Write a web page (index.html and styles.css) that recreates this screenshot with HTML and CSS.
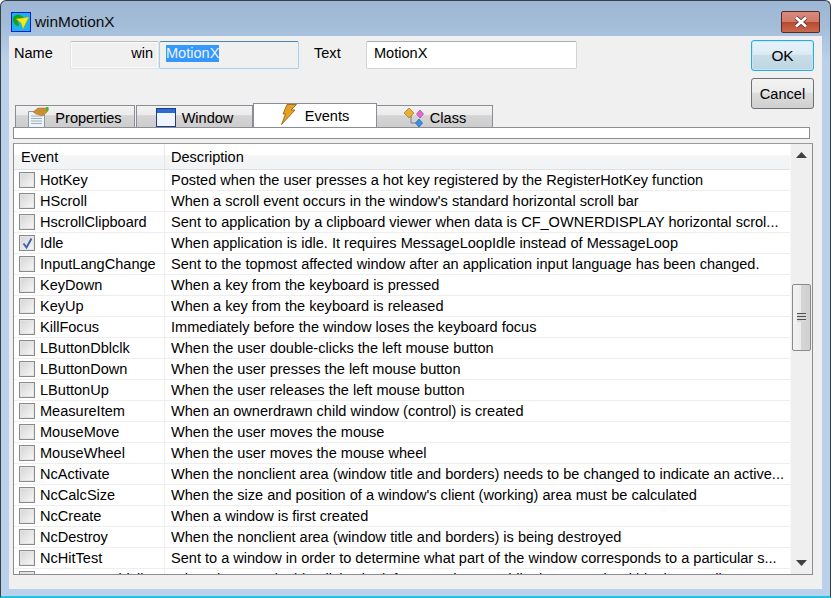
FILE: index.html
```html
<!DOCTYPE html>
<html lang="en">
<head>
<meta charset="utf-8">
<title>winMotionX</title>
<link rel="stylesheet" href="styles.css">
</head>
<body>
<div class="window">
  <div class="titlebar">
    <svg class="app-icon" width="20" height="20" viewBox="0 0 20 20">
      <rect x="0.5" y="0.5" width="19" height="19" fill="#19b5e8" stroke="#1414d8"/>
      <path d="M2 9 C1 4 5 2 9 3 L14 6 L7 9 L8 14 C5 14 3 12 2 9Z" fill="#18a018"/>
      <path d="M5 7 L18 5 L12 17 L10 11Z" fill="#f4e820" stroke="#b0a010" stroke-width=".5"/>
    </svg>
    <span class="title">winMotionX</span>
    <div class="close"><svg width="16" height="12" viewBox="0 0 16 12"><path d="M3 1.5 L13 10.5 M13 1.5 L3 10.5" stroke="#50302c" stroke-width="4.2"/><path d="M3 1.5 L13 10.5 M13 1.5 L3 10.5" stroke="#fff" stroke-width="2.8"/></svg></div>
  </div>
  <div class="client">
    <div class="top">
      <div class="top-left">
        <div class="form-row">
          <span class="label name-label">Name</span>
          <div class="field prefix">win</div>
          <div class="field focused"><span class="selected">MotionX</span></div>
          <span class="label text-label">Text</span>
          <div class="field plain">MotionX</div>
        </div>
        <div class="tabs">
          <div class="tab tab-props">
            <svg width="21" height="21" viewBox="0 0 21 21"><path d="M.5 4.5 H16.5 V20.5 H.5Z" fill="#eef3f6" stroke="#8a9aa6"/><path d="M3 9H14M3 11.5H14M3 14H14M3 16.5H14" stroke="#9ab0bc"/><path d="M5 5 L10 1 H20 V4 L15 9 L8 7Z" fill="#c89030" stroke="#a87420" stroke-width=".5"/><rect x="18" y="0" width="2.5" height="3.5" fill="#30c030"/></svg>
            <span>Properties</span>
          </div>
          <div class="tab tab-window">
            <svg width="20" height="19" viewBox="0 0 20 19"><rect x=".5" y=".5" width="19" height="18" fill="#f0f4fc" stroke="#1c3c8c"/><rect x="1" y="1" width="18" height="4" fill="#2c6cd0"/></svg>
            <span>Window</span>
          </div>
          <div class="tab tab-events active">
            <svg width="16" height="21" viewBox="0 0 16 21"><path d="M6 .5 H15.5 L10 6 H14 L.5 20.5 L4.5 10 H2Z" fill="#e8a020" stroke="#8a5a18" stroke-width=".8"/></svg>
            <span>Events</span>
          </div>
          <div class="tab tab-class">
            <svg width="21" height="19" viewBox="0 0 21 19"><path d="M8 7 V15 H14" fill="none" stroke="#6a8090"/><path d="M6 0 L11 5 L6 10 L1 5Z" fill="#e8b030" stroke="#a07818" stroke-width=".7"/><path d="M17 2 L20.5 6 L17 10 L13.5 6Z" fill="#e868d0" stroke="#a040a0" stroke-width=".7"/><path d="M16 11 L19.5 15 L16 19 L12.5 15Z" fill="#3c90e0" stroke="#2060a0" stroke-width=".7"/></svg>
            <span>Class</span>
          </div>
        </div>
      </div>
      <div class="buttons">
        <div class="btn default">OK</div>
        <div class="btn">Cancel</div>
      </div>
    </div>
    <div class="strip"></div>
    <div class="list">
      <div class="table">
        <div class="head">
          <div class="h-event">Event</div>
          <div class="h-desc">Description</div>
        </div>
        <div class="rows">
          <div class="row"><span class="check"></span><span class="ev">HotKey</span><span class="desc">Posted when the user presses a hot key registered by the RegisterHotKey function</span></div>
          <div class="row"><span class="check"></span><span class="ev">HScroll</span><span class="desc">When a scroll event occurs in the window's standard horizontal scroll bar</span></div>
          <div class="row"><span class="check"></span><span class="ev">HscrollClipboard</span><span class="desc">Sent to application by a clipboard viewer when data is CF_OWNERDISPLAY horizontal scrol...</span></div>
          <div class="row"><span class="check checked"><svg width="13" height="13" viewBox="0 0 13 13"><path d="M2.5 6.5 L5.5 10.5 L10.5 1.5" fill="none" stroke="#4060b0" stroke-width="2"/></svg></span><span class="ev">Idle</span><span class="desc">When application is idle. It requires MessageLoopIdle instead of MessageLoop</span></div>
          <div class="row"><span class="check"></span><span class="ev">InputLangChange</span><span class="desc">Sent to the topmost affected window after an application input language has been changed.</span></div>
          <div class="row"><span class="check"></span><span class="ev">KeyDown</span><span class="desc">When a key from the keyboard is pressed</span></div>
          <div class="row"><span class="check"></span><span class="ev">KeyUp</span><span class="desc">When a key from the keyboard is released</span></div>
          <div class="row"><span class="check"></span><span class="ev">KillFocus</span><span class="desc">Immediately before the window loses the keyboard focus</span></div>
          <div class="row"><span class="check"></span><span class="ev">LButtonDblclk</span><span class="desc">When the user double-clicks the left mouse button</span></div>
          <div class="row"><span class="check"></span><span class="ev">LButtonDown</span><span class="desc">When the user presses the left mouse button</span></div>
          <div class="row"><span class="check"></span><span class="ev">LButtonUp</span><span class="desc">When the user releases the left mouse button</span></div>
          <div class="row"><span class="check"></span><span class="ev">MeasureItem</span><span class="desc">When an ownerdrawn child window (control) is created</span></div>
          <div class="row"><span class="check"></span><span class="ev">MouseMove</span><span class="desc">When the user moves the mouse</span></div>
          <div class="row"><span class="check"></span><span class="ev">MouseWheel</span><span class="desc">When the user moves the mouse wheel</span></div>
          <div class="row"><span class="check"></span><span class="ev">NcActivate</span><span class="desc">When the nonclient area (window title and borders) needs to be changed to indicate an active...</span></div>
          <div class="row"><span class="check"></span><span class="ev">NcCalcSize</span><span class="desc">When the size and position of a window's client (working) area must be calculated</span></div>
          <div class="row"><span class="check"></span><span class="ev">NcCreate</span><span class="desc">When a window is first created</span></div>
          <div class="row"><span class="check"></span><span class="ev">NcDestroy</span><span class="desc">When the nonclient area (window title and borders) is being destroyed</span></div>
          <div class="row"><span class="check"></span><span class="ev">NcHitTest</span><span class="desc">Sent to a window in order to determine what part of the window corresponds to a particular s...</span></div>
          <div class="row"><span class="check"></span><span class="ev">NcLButtonDblclk</span><span class="desc">When the user double-clicks the left mouse button while the cursor is within the nonclient</span></div>
        </div>
      </div>
      <div class="scrollbar">
        <svg class="arrow" width="11" height="6" viewBox="0 0 11 6"><path d="M5.5 0 L11 6 H0Z" fill="#404040"/></svg>
        <div class="track"><div class="thumb"><span class="grip"></span></div></div>
        <svg class="arrow" width="11" height="6" viewBox="0 0 11 6"><path d="M5.5 6 L11 0 H0Z" fill="#404040"/></svg>
      </div>
    </div>
  </div>
</div>
</body>
</html>
```
FILE: styles.css
```css
* { box-sizing: border-box; }
html, body { margin: 0; padding: 0; }
body { width: 831px; height: 598px; overflow: hidden; font-family: "Liberation Sans", Arial, sans-serif; font-size: 14.55px; color: #000; background: #fff; }
.window { width: 831px; height: 598px; display: flex; flex-direction: column; border: 1px solid #3a4048; border-bottom: 2px solid #20c4e0; border-radius: 6px 6px 0 0; background: linear-gradient(#9db7d4 0, #a3bcd8 24px, #b9d1eb 60px, #b9d1eb 100%); padding: 0 8px 7px 8px; }
.titlebar { height: 35px; flex: none; display: flex; align-items: center; padding-left: 2px; padding-top: 7px; }
.app-icon { flex: none; }
.title { margin-left: 4px; font-size: 15.4px; color: #0c0c0c; }
.close { margin-left: auto; margin-right: 2px; width: 39px; height: 22px; border: 1px solid #5a2a28; border-radius: 2px; background: linear-gradient(#d98a7c 0, #d07a6a 48%, #b8482c 50%, #c86a50 100%); display: flex; align-items: center; justify-content: center; }
.client { flex: 1; min-height: 0; background: #f0f0f0; display: flex; flex-direction: column; padding: 0 9px 0 4px; }
.top { display: flex; height: 92px; flex: none; }
.top-left { flex: 1; min-width: 0; display: flex; flex-direction: column; }
.form-row { display: flex; align-items: center; height: 28px; margin-top: 5px; }
.label { color: #000; }
.name-label { width: 57px; padding-left: 1px; position: relative; top: -2px; }
.text-label { width: 52px; margin-left: 15px; position: relative; top: -2px; }
.field { height: 28px; border: 1px solid #d0d4d8; border-top-color: #a8acb0; border-radius: 2px; line-height: 23px; padding: 0 7px; }
.prefix { width: 89px; text-align: right; background: #f0f0f0; border-color: #e0e4e8; border-top-color: #b8bcc0; box-shadow: inset 0 0 0 1px #fbfbfb; padding-right: 5px; }
.focused { width: 140px; background: #f0f0f0; border-color: #a8d0ec; border-top-color: #4c88ac; line-height: 23px; padding-left: 6px; }
.selected { background: #3399ff; color: #f0f0f0; display: inline-block; line-height: 17px; }
.plain { width: 211px; background: #fff; }
.tabs { display: flex; align-items: flex-end; height: 25px; margin-top: 34px; padding-left: 2px; flex: none; }
.tab { height: 23px; display: flex; align-items: center; justify-content: center; border: 1px solid #8c8c94; border-bottom: 0; background: linear-gradient(#f2f2f2 0, #ebebeb 40%, #d4d4d4 44%, #cdcdcd 100%); gap: 6px; margin-right: 1px; }
.tab span { position: relative; top: 1px; }
.tab-props { width: 120px; }
.tab-window { width: 117px; margin-right: 0; }
.tab-events { width: 124px; height: 25px; background: #fff; margin-right: 0; border-right: 1px solid #8c8c94; gap: 8px; }
.tab-events svg { position: relative; top: -2px; }
.tab-events span { top: 0; }
.tab-class { width: 116px; margin-right: 0; border-left: 0; }
.buttons { width: 63px; flex: none; display: flex; flex-direction: column; gap: 7px; margin-top: 4px; margin-right: -1px; }
.btn { height: 31px; border: 1px solid #707070; border-radius: 3px; display: flex; align-items: center; justify-content: center; background: linear-gradient(#f2f2f2 0, #ebebeb 45%, #dcdcdc 50%, #cfcfcf 100%); }
.default { border-color: #2ea8e0; background: linear-gradient(#e8f2f8 0, #dcecf4 45%, #c8dde8 50%, #bfd6e2 100%); box-shadow: inset 0 0 0 1px #bfe8f8; font-size: 15.4px; }
.strip { height: 11px; flex: none; background: #fff; border: 1px solid #8c8c94; border-top: 0; width: 797px; box-shadow: 0 -1px 0 #8c8c94; position: relative; z-index: 0; }
.list { margin-top: 4px; height: 432px; width: 800px; flex: none; border: 1px solid #8c8c94; border-top-color: #9a9a9a; background: #fff; display: flex; overflow: hidden; }
.table { flex: 1; min-width: 0; overflow: hidden; padding-top: 1px; }
.head { height: 25px; display: flex; align-items: flex-start; background: linear-gradient(#ffffff 0, #ffffff 40%, #f4f5f6 45%, #f2f3f4 100%); border-bottom: 1px solid #e0e0e0; }
.h-event { width: 151px; padding-left: 7px; height: 100%; line-height: 24px; border-right: 1px solid #e8e8e8; }
.h-desc { padding-left: 6px; line-height: 24px; }
.rows { display: flex; flex-direction: column; }
.row { height: 21px; flex: none; display: flex; align-items: center; border-bottom: 1px solid #eeeeee; white-space: nowrap; }
.check { flex: none; width: 16px; height: 16px; margin-left: 5px; border: 1px solid #8a8a8a; background: linear-gradient(135deg, #d4d4d4, #f8f8f8); box-shadow: inset 0 0 0 1px #e4e4e4; display: flex; align-items: center; justify-content: center; }
.ev { width: 125px; margin-left: 5px; height: 21px; line-height: 20px; border-right: 1px solid #eeeeee; flex: none; }
.desc { padding-left: 6px; line-height: 20px; }
.scrollbar { width: 22px; flex: none; background: #efefef; border-left: 1px solid #f8f8f8; display: flex; flex-direction: column; align-items: center; padding: 8px 0; }
.arrow { flex: none; }
.track { flex: 1; width: 100%; padding-top: 126px; }
.thumb { width: 19px; height: 67px; margin-left: 1px; border: 1px solid #8a8a8a; border-radius: 2px; background: linear-gradient(90deg, #f2f2f2 0, #ededed 45%, #d6d6d6 50%, #d0d0d0 100%); display: flex; align-items: center; justify-content: center; }
.grip { width: 9px; height: 9px; background: repeating-linear-gradient(#505050 0, #505050 1px, #d8d8d8 1px, #d8d8d8 3px); }
```
